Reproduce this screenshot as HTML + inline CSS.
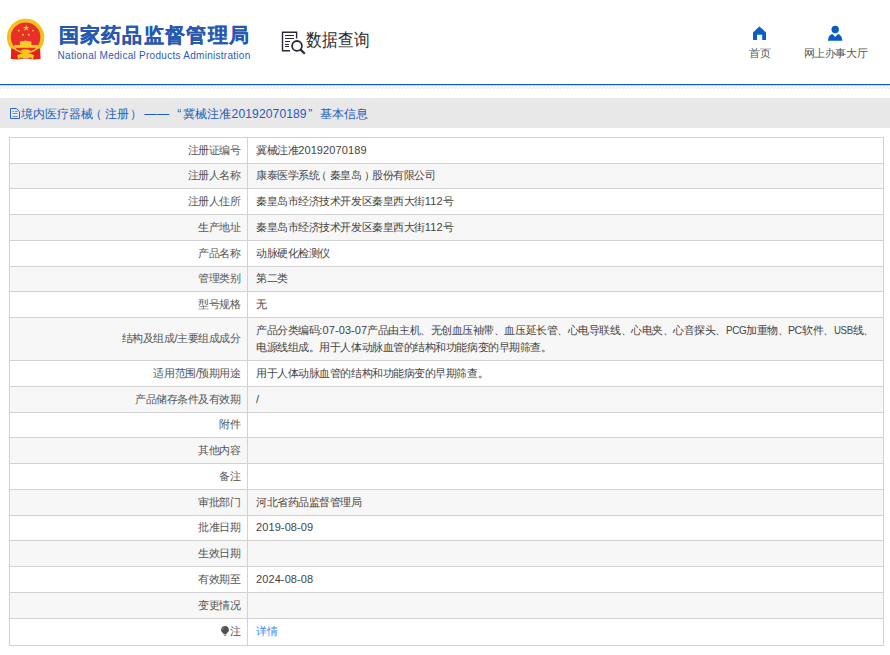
<!DOCTYPE html>
<html><head><meta charset="utf-8">
<style>
html,body{margin:0;padding:0;background:#fff;}
body{width:890px;height:655px;position:relative;overflow:hidden;font-family:"Liberation Sans",sans-serif;}
.abs{position:absolute;}
.title{position:absolute;left:58.5px;top:21.6px;font-size:20px;font-weight:700;color:#2658b0;letter-spacing:1.3px;-webkit-text-stroke:0.2px #2658b0;white-space:nowrap;line-height:26px;}
.en{position:absolute;left:57.6px;top:49.2px;font-size:10px;letter-spacing:0.28px;color:#2a5cb5;white-space:nowrap;line-height:14px;}
.sq{position:absolute;left:305.5px;top:29.3px;font-size:15.8px;color:#2b2b2b;line-height:22px;white-space:nowrap;transform:scaleY(1.15);transform-origin:0 50%;}
.nav{position:absolute;font-size:11px;letter-spacing:-0.4px;color:#555;line-height:14px;white-space:nowrap;}
.blue{position:absolute;left:0;top:84px;width:890px;height:1px;background:#0a5cc2;}
.blue2{position:absolute;left:0;top:85px;width:890px;height:1px;background:#c6daf2;}
.hatch{position:absolute;left:0;top:86px;}
.bar{position:absolute;left:0;top:98px;width:890px;height:30px;background:#e8e8e8;}
.cr{position:absolute;top:105px;font-size:12.1px;color:#1f5dbd;line-height:18px;white-space:nowrap;}
.row{position:absolute;left:9px;width:875px;}
.lab{position:absolute;left:0;top:0;bottom:0;width:231.5px;display:flex;align-items:center;justify-content:flex-end;font-size:11px;letter-spacing:-0.45px;color:#555;white-space:nowrap;}
.val{position:absolute;left:247px;top:0;bottom:0;right:0;display:flex;align-items:center;font-size:11px;letter-spacing:-0.45px;color:#444;line-height:17px;white-space:nowrap;}
.dg{letter-spacing:0.1px;}
.la1{display:inline-block;transform-origin:0 0;transform:scaleX(0.898);margin-right:-2.3px;}
.la2{display:inline-block;transform-origin:0 0;transform:scaleX(0.96);margin-right:-0.58px;}
.la3{display:inline-block;transform-origin:0 0;transform:scaleX(0.88);margin-right:-2.57px;}
.hl{position:absolute;left:9px;width:875px;height:1px;background:#d2d2d2;}
.vl{position:absolute;top:137px;height:509px;width:1px;background:#d2d2d2;}
.link{color:#3b8cf0;}
</style></head><body>
<svg class="abs" style="left:0;top:0" width="50" height="65" viewBox="0 0 50 65">
  <circle cx="25.6" cy="37.4" r="18.7" fill="#f3c01c"/>
  <circle cx="25.6" cy="37.2" r="14.8" fill="#e8302a"/>
  <path d="M11.2 48.5 L18 49 Q25.6 54 33.5 49 L40.1 48.5 L40.6 59 L33.5 59.6 Q25.6 57.5 17.8 59.6 L10.8 59 Z" fill="#e3221c"/>
  <path d="M11.3 45.6 Q25.6 58.5 39.9 45.6 L38.4 48.6 Q25.6 58.8 12.8 48.6 Z" fill="#f6c81e"/>
  <path d="M14.4 45 H37.5 V47.8 H14.4 Z" fill="#f6cc2a"/>
  <path d="M19.9 41.7 H31.4 V45.1 H19.9 Z" fill="#f6cc2a"/>
  <path d="M19.2 41.9 L25.6 40.4 L32 41.9 Z" fill="#f6cc2a"/>
  <path d="M21 50.3 Q25.6 48 30.2 50.3 L29 52.6 Q25.6 51.5 22.2 52.6 Z" fill="#f6c81e"/>
  <path d="M17 55.2 L21.5 53.6 Q25.6 52.2 29.7 53.6 L34.2 55.2 L32.8 59.3 L30.3 57.6 Q25.6 59 20.9 57.6 L18.4 59.3 Z" fill="#f6c81e"/>
  <polygon points="26.1,24.9 26.9,27.1 29.2,27.1 27.3,28.5 28,30.7 26.1,29.3 24.2,30.7 24.9,28.5 23,27.1 25.3,27.1" fill="#f7d23a"/>
  <circle cx="18.8" cy="30.6" r="0.95" fill="#f7d23a"/><circle cx="33" cy="30.6" r="0.95" fill="#f7d23a"/>
  <circle cx="22.9" cy="34.7" r="0.95" fill="#f7d23a"/><circle cx="28.8" cy="34.7" r="0.95" fill="#f7d23a"/>
</svg>
<div class="title">国家药品监督管理局</div>
<div class="en">National Medical Products Administration</div>
<svg class="abs" style="left:280px;top:30px" width="28" height="27" viewBox="0 0 28 27">
  <path d="M16.6 8.5 V2.2 H2.5 V20.7 H10" fill="none" stroke="#2a2a3a" stroke-width="1.4"/>
  <path d="M5 5.5 H14 M5 8.5 H14 M5 11.5 H10 M5 14.5 H9 M5 16.5 H9" stroke="#2a2a3a" stroke-width="1"/>
  <circle cx="17" cy="15.9" r="4.9" fill="#fff" stroke="#2a2a3a" stroke-width="1.8"/>
  <path d="M20.6 19.6 L24.8 23.8" stroke="#2a2a3a" stroke-width="2.2"/>
</svg>
<div class="sq">数据查询</div>
<svg class="abs" style="left:752px;top:26px" width="15" height="14" viewBox="0 0 15 14">
  <path d="M7.4 0.5 L14 6.4 V13.9 H10.2 V8.8 H5 V13.9 H1 V6.4 Z" fill="#0a5ec4"/>
</svg>
<div class="nav" style="left:749px;top:46px">首页</div>
<svg class="abs" style="left:827px;top:25px" width="16" height="16" viewBox="0 0 16 16">
  <circle cx="8.2" cy="4.5" r="3.7" fill="#0a5ac6"/>
  <path d="M0.9 15.8 Q1.3 9.9 5.4 8.9 L8.2 12 L11 8.9 Q15 9.9 15.4 15.8 Z" fill="#0a5ac6"/>
</svg>
<div class="nav" style="left:803.6px;top:46px">网上办事大厅</div>
<div class="blue"></div>
<div class="blue2"></div>
<svg class="hatch" width="890" height="3" viewBox="0 0 890 3">
  <defs><pattern id="hp" width="3.5" height="3" patternUnits="userSpaceOnUse"><path d="M-0.5 3.25 L3.25 -0.5" stroke="#e2e2e2" stroke-width="0.9"/><path d="M3 3.25 L6.75 -0.5" stroke="#e2e2e2" stroke-width="0.9"/></pattern></defs>
  <rect width="890" height="3" fill="url(#hp)"/>
</svg>
<div class="bar"></div>
<svg class="abs" style="left:10px;top:108px" width="10" height="11" viewBox="0 0 10 11">
  <path d="M0.5 0.5 H6.3 L9.5 3.7 V10.5 H0.5 Z" fill="none" stroke="#2a62c8" stroke-width="1"/>
  <path d="M2.5 3.5 H4 M5 3.5 H7.5 M2.5 5.5 H7.5 M2.5 8.5 H7.5" stroke="#6b8fd0" stroke-width="1"/>
</svg>
<div class="cr" style="left:20.7px">境内医疗器械</div>
<div class="cr" style="left:90px">（</div>
<div class="cr" style="left:104.7px">注册</div>
<div class="cr" style="left:130.3px">）</div>
<div class="cr" style="left:144.2px;letter-spacing:0.8px">——</div>
<div class="cr" style="left:177.3px">“</div>
<div class="cr" style="left:183px">冀械注准</div>
<div class="cr" style="left:231.6px;letter-spacing:0.1px">20192070189</div>
<div class="cr" style="left:308.3px">”</div>
<div class="cr" style="left:320px">基本信息</div>
<div class="row" style="top:137px;height:26px;background:#fff"><div class="lab">注册证编号</div><div class="val"><div>冀械注准<span class="dg">20192070189</span></div></div></div>
<div class="row" style="top:163px;height:25px;background:#f7f7f7"><div class="lab">注册人名称</div><div class="val"><div>康泰医学系统<span style='position:relative;left:-3px'>（</span>秦皇岛<span style='position:relative;left:2px'>）</span>股份有限公司</div></div></div>
<div class="row" style="top:188px;height:26px;background:#fff"><div class="lab">注册人住所</div><div class="val"><div>秦皇岛市经济技术开发区秦皇西大街<span class="dg">112</span>号</div></div></div>
<div class="row" style="top:214px;height:26px;background:#f7f7f7"><div class="lab">生产地址</div><div class="val"><div>秦皇岛市经济技术开发区秦皇西大街<span class="dg">112</span>号</div></div></div>
<div class="row" style="top:240px;height:26px;background:#fff"><div class="lab">产品名称</div><div class="val"><div>动脉硬化检测仪</div></div></div>
<div class="row" style="top:266px;height:25px;background:#f7f7f7"><div class="lab">管理类别</div><div class="val"><div>第二类</div></div></div>
<div class="row" style="top:291px;height:26px;background:#fff"><div class="lab">型号规格</div><div class="val"><div>无</div></div></div>
<div class="row" style="top:317px;height:43px;background:#f7f7f7"><div class="lab">结构及组成/主要组成成分</div><div class="val"><div>产品分类编码<span class="dg">:07-03-07</span>产品由主机、无创血压袖带、血压延长管、心电导联线、心电夹、心音探头、<span class='la1'>PCG</span>加重物、<span class='la2'>PC</span>软件、<span class='la3'>USB</span>线、<br>电源线组成。用于人体动脉血管的结构和功能病变的早期筛查。</div></div></div>
<div class="row" style="top:360px;height:26px;background:#fff"><div class="lab">适用范围/预期用途</div><div class="val"><div>用于人体动脉血管的结构和功能病变的早期筛查。</div></div></div>
<div class="row" style="top:386px;height:26px;background:#f7f7f7"><div class="lab">产品储存条件及有效期</div><div class="val"><div>/</div></div></div>
<div class="row" style="top:412px;height:25px;background:#fff"><div class="lab">附件</div><div class="val"><div></div></div></div>
<div class="row" style="top:437px;height:26px;background:#f7f7f7"><div class="lab">其他内容</div><div class="val"><div></div></div></div>
<div class="row" style="top:463px;height:26px;background:#fff"><div class="lab">备注</div><div class="val"><div></div></div></div>
<div class="row" style="top:489px;height:26px;background:#f7f7f7"><div class="lab">审批部门</div><div class="val"><div>河北省药品监督管理局</div></div></div>
<div class="row" style="top:515px;height:25px;background:#fff"><div class="lab">批准日期</div><div class="val"><div><span class="dg">2019-08-09</span></div></div></div>
<div class="row" style="top:540px;height:26px;background:#f7f7f7"><div class="lab">生效日期</div><div class="val"><div></div></div></div>
<div class="row" style="top:566px;height:26px;background:#fff"><div class="lab">有效期至</div><div class="val"><div><span class="dg">2024-08-08</span></div></div></div>
<div class="row" style="top:592px;height:26px;background:#f7f7f7"><div class="lab">变更情况</div><div class="val"><div></div></div></div>
<div class="row" style="top:618px;height:27px;background:#fff"><div class="lab"><svg width='8' height='10' viewBox='0 0 8 10' style='margin-right:1.3px;position:relative;top:-0.6px'><path d='M4 0 C6.3 0 7.9 1.7 7.9 3.9 C7.9 5.6 6.7 6.4 5.6 7.6 L5.3 8.3 H2.7 L2.4 7.6 C1.3 6.4 0.1 5.6 0.1 3.9 C0.1 1.7 1.7 0 4 0 Z' fill='#505050'/><path d='M1.6 3.6 C1.6 2.4 2.4 1.5 3.5 1.3' stroke='#8aa0b8' stroke-width='0.8' fill='none'/><rect x='2.8' y='8.6' width='2.4' height='1.4' fill='#9a8a9a'/></svg>注</div><div class="val"><div><span class='link'>详情</span></div></div></div>
<div class="hl" style="top:137px"></div>
<div class="hl" style="top:163px"></div>
<div class="hl" style="top:188px"></div>
<div class="hl" style="top:214px"></div>
<div class="hl" style="top:240px"></div>
<div class="hl" style="top:266px"></div>
<div class="hl" style="top:291px"></div>
<div class="hl" style="top:317px"></div>
<div class="hl" style="top:360px"></div>
<div class="hl" style="top:386px"></div>
<div class="hl" style="top:412px"></div>
<div class="hl" style="top:437px"></div>
<div class="hl" style="top:463px"></div>
<div class="hl" style="top:489px"></div>
<div class="hl" style="top:515px"></div>
<div class="hl" style="top:540px"></div>
<div class="hl" style="top:566px"></div>
<div class="hl" style="top:592px"></div>
<div class="hl" style="top:618px"></div>
<div class="hl" style="top:645px"></div>
<div class="vl" style="left:9px"></div>
<div class="vl" style="left:247px"></div>
<div class="vl" style="left:883px"></div>
</body></html>
